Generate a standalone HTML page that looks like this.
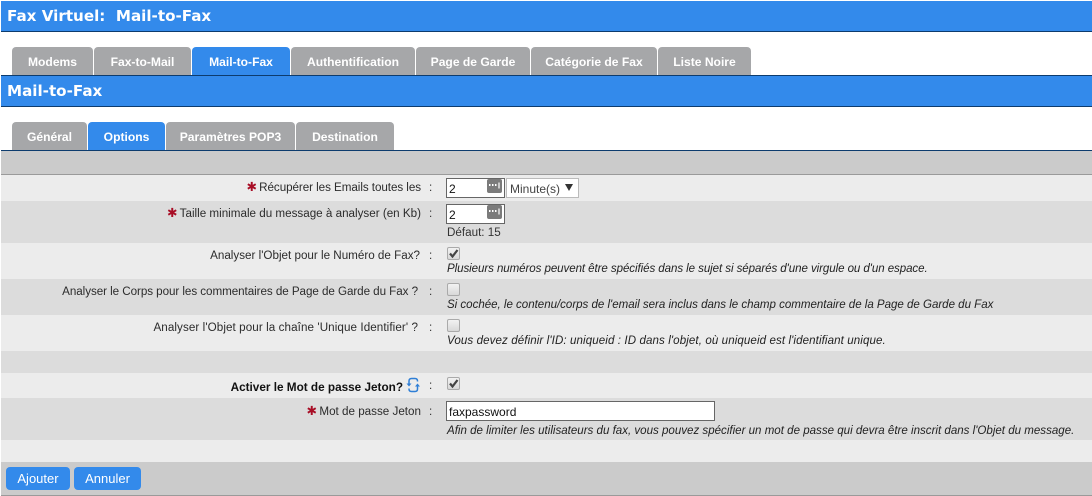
<!DOCTYPE html>
<html lang="fr"><head><meta charset="utf-8"><title>Mail-to-Fax</title>
<style>
html,body{margin:0;padding:0;background:#fff;width:1092px;height:496px;overflow:hidden}
body{position:relative;font-family:"Liberation Sans",sans-serif;font-size:11.65px;color:#222}
.a{position:absolute}
.t{position:absolute;white-space:nowrap;line-height:16px}
.bar{position:absolute;left:1px;width:1091px;background:#338aeb;border-bottom:1px solid #0d3c6e;box-sizing:border-box}
.ttl{position:absolute;left:7px;color:#fff;font-weight:bold;font-family:"DejaVu Sans",sans-serif;font-size:15.150px;line-height:20px;white-space:nowrap}
.tab{position:absolute;box-sizing:border-box;height:28px;background:#a6a7a9;border-radius:4px 4px 0 0;color:#fff;font-weight:bold;font-size:12.100px;line-height:30px;text-align:center;white-space:nowrap}
.tab.on{background:#338aeb}
.row{position:absolute;left:1px;width:1091px}
.l{position:absolute;right:671px;white-space:nowrap;line-height:16px;text-align:right;color:#2c2c2c;margin-top:1px}
.c{position:absolute;left:429px;line-height:16px;color:#333;margin-top:1px}
.s{color:#a80d25;font-size:12.500px;line-height:12px;font-family:"DejaVu Sans",sans-serif;margin-right:-1px}
.h{position:absolute;left:447px;white-space:nowrap;font-style:italic;font-size:11.55px;line-height:15px;color:#222;margin-top:1px}
.in{position:absolute;box-sizing:border-box;background:#fff;border:1px solid #666;height:20px;font-size:12px;line-height:20px;padding-left:2px;color:#111}
.cb{position:absolute;left:447px;width:11px;height:11px;border:1px solid #aaa;border-radius:2px;background:linear-gradient(#f2f2f2,#d8d8d8)}
.btn{position:absolute;top:467px;height:23px;background:#338aeb;border-radius:4px;color:#fff;font-size:13px;line-height:24px;text-align:center}
</style></head><body>
<div class="bar" style="top:1px;height:31px"></div>
<div class="ttl" style="top:6px">Fax Virtuel:&nbsp; Mail-to-Fax</div>

<div class="tab" style="left:12px;top:47px;width:81px">Modems</div>
<div class="tab" style="left:94px;top:47px;width:97px">Fax-to-Mail</div>
<div class="tab on" style="left:192px;top:47px;width:98px">Mail-to-Fax</div>
<div class="tab" style="left:291px;top:47px;width:124px">Authentification</div>
<div class="tab" style="left:416px;top:47px;width:114px">Page de Garde</div>
<div class="tab" style="left:531px;top:47px;width:126px">Catégorie de Fax</div>
<div class="tab" style="left:658px;top:47px;width:93px">Liste Noire</div>

<div class="bar" style="top:75px;height:32px;border-top:1px solid #0d3c6e"></div>
<div class="ttl" style="top:81px">Mail-to-Fax</div>

<div class="tab" style="left:12px;top:122px;width:75px">Général</div>
<div class="tab on" style="left:88px;top:122px;width:77px">Options</div>
<div class="tab" style="left:166px;top:122px;width:129px">Paramètres POP3</div>
<div class="tab" style="left:296px;top:122px;width:98px">Destination</div>

<div class="row" style="top:150px;height:1px;background:#0d3c6e"></div>
<div class="row" style="top:151px;height:23px;background:#cbcbcb"></div>
<div class="row" style="top:174px;height:1px;background:#9a9a9a"></div>
<div class="row" style="top:175px;height:26px;background:#ececec"></div>
<div class="row" style="top:201px;height:42px;background:#dcdcdc"></div>
<div class="row" style="top:243px;height:36px;background:#ececec"></div>
<div class="row" style="top:279px;height:36px;background:#dcdcdc"></div>
<div class="row" style="top:315px;height:36px;background:#ececec"></div>
<div class="row" style="top:351px;height:22px;background:#dcdcdc"></div>
<div class="row" style="top:373px;height:25px;background:#ececec"></div>
<div class="row" style="top:398px;height:42px;background:#dcdcdc"></div>
<div class="row" style="top:440px;height:22px;background:#ececec"></div>
<div class="row" style="top:462px;height:33px;background:#cbcbcb"></div>
<div class="row" style="top:495px;height:1px;background:#9a9a9a"></div>

<div class="l" style="top:179px;letter-spacing:-.06px"><span class="s">✱</span> Récupérer les Emails toutes les</div><div class="c" style="top:179px">:</div>
<div class="l" style="top:205px"><span class="s">✱</span> Taille minimale du message à analyser (en Kb)</div><div class="c" style="top:205px">:</div>
<div class="l" style="top:247px;right:672px">Analyser l'Objet pour le Numéro de Fax?</div><div class="c" style="top:247px">:</div>
<div class="l" style="top:283px;right:674px;letter-spacing:-.06px">Analyser le Corps pour les commentaires de Page de Garde du Fax ?</div><div class="c" style="top:283px">:</div>
<div class="l" style="top:319px;right:674px;letter-spacing:.08px">Analyser l'Objet pour la chaîne 'Unique Identifier' ?</div><div class="c" style="top:319px">:</div>
<div class="l" style="top:379px;right:689px;font-weight:bold;color:#111;font-size:11.750px">Activer le Mot de passe Jeton?</div><div class="c" style="top:377px">:</div>
<div class="l" style="top:403px"><span class="s">✱</span> Mot de passe Jeton</div><div class="c" style="top:403px">:</div>

<svg class="a" style="left:406px;top:377px" width="14" height="16" viewBox="0 0 14 16" fill="none" stroke="#2f7fd6" stroke-width="1.500"><path d="M3 7V4Q3 1.500 5.500 1.500H9Q11.500 1.500 11.500 4V4.500"/><path d="M11.500 9v3Q11.500 14.500 9 14.500H5.500Q3 14.500 3 12V11.500"/><path d="M.5 6.500H5.500L3 9.500z" fill="#2f7fd6" stroke="none"/><path d="M9 9.500H14L11.500 6.500z" fill="#2f7fd6" stroke="none"/></svg>

<div class="in" style="left:446px;top:178px;width:59px">2</div>
<svg class="a" style="left:487px;top:179px" width="15" height="14"><rect width="15" height="14" rx="2" fill="#7b7b7b"/><path d="M2 6h1.500M5 6h1.500M8 6h1.500" stroke="#fff" stroke-width="2"/><path d="M12 3.500v6" stroke="#fff" stroke-width="1.200"/></svg>
<div class="a" style="left:506px;top:178px;width:73px;height:20px;box-sizing:border-box;background:#fff;border:1px solid #bbb;font-size:12px;line-height:21px;padding-left:3px;color:#444">Minute(s)</div>
<svg class="a" style="left:565px;top:184px" width="8" height="7"><path d="M0 0H8L4 7z" fill="#333"/></svg>

<div class="in" style="left:446px;top:204px;width:59px">2</div>
<svg class="a" style="left:487px;top:205px" width="15" height="14"><rect width="15" height="14" rx="2" fill="#7b7b7b"/><path d="M2 6h1.500M5 6h1.500M8 6h1.500" stroke="#fff" stroke-width="2"/><path d="M12 3.500v6" stroke="#fff" stroke-width="1.200"/></svg>
<div class="t" style="left:447px;top:225px;color:#333">Défaut: 15</div>

<div class="cb" style="top:247px"></div>
<svg class="a" style="left:447px;top:247px" width="13" height="13"><path d="M3 6.500L5.500 9.500L10.500 3" fill="none" stroke="#444" stroke-width="2.200"/></svg>
<div class="h" style="top:261px;letter-spacing:-.075px">Plusieurs numéros peuvent être spécifiés dans le sujet si séparés d'une virgule ou d'un espace.</div>

<div class="cb" style="top:283px"></div>
<div class="h" style="top:297px;letter-spacing:-.02px">Si cochée, le contenu/corps de l'email sera inclus dans le champ commentaire de la Page de Garde du Fax</div>

<div class="cb" style="top:319px"></div>
<div class="h" style="top:333px;letter-spacing:.1px">Vous devez définir l'ID: uniqueid : ID dans l'objet, où uniqueid est l'identifiant unique.</div>

<div class="cb" style="top:377px"></div>
<svg class="a" style="left:447px;top:377px" width="13" height="13"><path d="M3 6.500L5.500 9.500L10.500 3" fill="none" stroke="#444" stroke-width="2.200"/></svg>

<div class="in" style="left:446px;top:401px;width:269px">faxpassword</div>
<div class="h" style="top:423px">Afin de limiter les utilisateurs du fax, vous pouvez spécifier un mot de passe qui devra être inscrit dans l'Objet du message.</div>

<div class="btn" style="left:6px;width:64px">Ajouter</div>
<div class="btn" style="left:74px;width:67px">Annuler</div>
</body></html>
